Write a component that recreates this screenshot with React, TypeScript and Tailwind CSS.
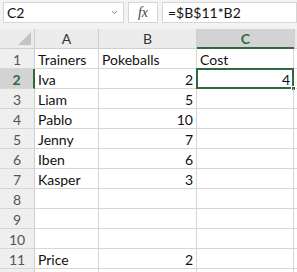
import { ChevronDown } from 'lucide-react';

const rows: [string, string, string][] = [
    ['Trainers', 'Pokeballs', 'Cost'],
    ['Iva', '2', '4'],
    ['Liam', '5', ''],
    ['Pablo', '10', ''],
    ['Jenny', '7', ''],
    ['Iben', '6', ''],
    ['Kasper', '3', ''],
    ['', '', ''],
    ['', '', ''],
    ['', '', ''],
    ['Price', '2', ''],
    ['', '', ''],
];

const isNum = (v: string) => v !== '' && !isNaN(Number(v));

const App = () => {
    return (
        <div className="w-[297px] h-[272px] overflow-hidden bg-white text-[#111]" style={{ fontFamily: 'Lato, "Open Sans", sans-serif' }}>
            {/* formula bar */}
            <div className="h-[29px] bg-[#f3f3f3] flex items-start gap-1 pl-[3px] pt-[2px]">
                <div className="w-[121px] h-[21px] bg-white border border-[#d6d6d6] flex items-center justify-between pl-[3px] pr-[4px] text-[14px]">
                    <span>C2</span>
                    <ChevronDown size={9} strokeWidth={2} className="text-[#555]" />
                </div>
                <div className="w-[30px] h-[21px] bg-white border border-[#d6d6d6] flex items-center justify-center text-[14px] italic text-[#444]" style={{ fontFamily: '"Liberation Serif", serif' }}>
                    fx
                </div>
                <div className="flex-1 h-[21px] bg-white border border-[#d6d6d6] flex items-center pl-[5px] text-[14px]">
                    =$B$11*B2
                </div>
            </div>
            {/* grid */}
            <div className="grid grid-cols-[35px_64px_98px_97px_40px] text-[14px]">
                <div className="h-[20px] bg-[#ececec] border-r border-b border-[#cfcfcf] relative">
                    <div className="absolute right-[3px] bottom-[3px] w-0 h-0 border-l-[13px] border-l-transparent border-b-[13px] border-b-[#c4c4c4]" />
                </div>
                <div className="h-[20px] bg-[#ececec] border-r border-b border-[#cfcfcf] flex items-center justify-center text-[#333]">A</div>
                <div className="h-[20px] bg-[#ececec] border-r border-b border-[#cfcfcf] flex items-center justify-center text-[#333]">B</div>
                <div className="h-[20px] bg-[#d3d3d3] border-b-2 border-[#2e6b3c] flex items-center justify-center text-[#2e6b3c] font-bold">C</div>
                <div className="h-[20px] bg-[#ececec] border-l border-b border-[#cfcfcf]" />
                {rows.map((r, i) => {
                    const sel = i === 1;
                    return [
                        <div
                            key={`h${i}`}
                            className={`h-[20px] border-b border-[#d6d6d6] flex items-center justify-center pt-[2px] ${sel ? 'bg-[#d3d3d3] text-[#2e6b3c] font-bold border-r-2 border-r-[#2e6b3c]' : 'bg-[#efefef] text-[#555] border-r border-r-[#cfcfcf]'}`}
                        >
                            {i < 11 ? i + 1 : ''}
                        </div>,
                        ...r.map((v, j) => {
                            const active = sel && j === 2;
                            return (
                                <div
                                    key={`c${i}-${j}`}
                                    className={`h-[20px] border-r border-b border-[#d6d6d6] flex items-center px-[3px] pt-[3px] leading-none relative ${isNum(v) ? 'justify-end' : 'justify-start'}`}
                                >
                                    {v}
                                    {active && (
                                        <>
                                            <div className="absolute -left-[1px] -top-[1px] -right-[1px] -bottom-[1px] border-2 border-[#2e6b3c]" />
                                            <div className="absolute -right-[3px] -bottom-[3px] w-[5px] h-[5px] bg-[#2e6b3c] border border-white" />
                                        </>
                                    )}
                                </div>
                            );
                        }),
                        <div key={`e${i}`} className="h-[20px] border-b border-[#d6d6d6]" />,
                    ];
                })}
            </div>
        </div>
    );
};

export default App;
